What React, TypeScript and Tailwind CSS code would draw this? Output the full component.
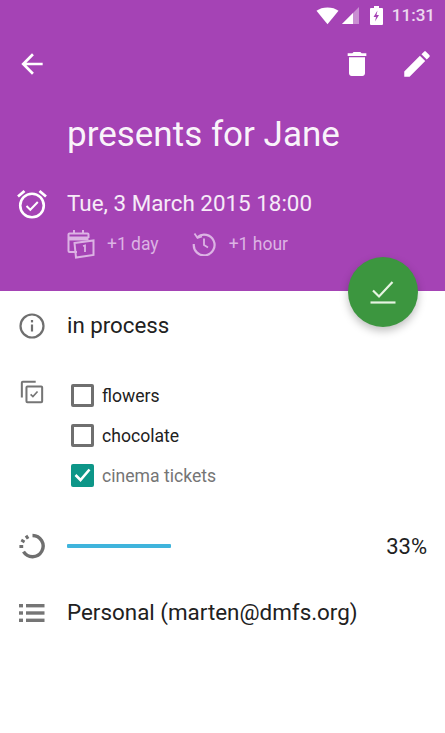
const ITEMS = [
  { label: "flowers", done: false },
  { label: "chocolate", done: false },
  { label: "cinema tickets", done: true },
];

function StatusBar() {
  return (
    <div className="flex h-[30px] items-center justify-end pr-[10px] pt-[1px] text-white">
      <svg width="23" height="18" viewBox="0 0 24 18">
        <path d="M0.500 3.500C3.500 1.200 7.500 0 12 0s8.500 1.200 11.500 3.500L12 17.500z" fill="#fff" />
      </svg>
      <svg width="18" height="18" viewBox="0 0 18 18" className="ml-[3px] mr-[10px]">
        <path d="M0 17L17 0v17z" fill="#fff" fillOpacity="0.4" />
        <path d="M0 17L11 6v11z" fill="#fff" />
      </svg>
      <svg width="13" height="19" viewBox="0 0 13 19" className="mr-[9px]">
        <path d="M4 0h5v2h3a1 1 0 0 1 1 1v15a1 1 0 0 1-1 1H1a1 1 0 0 1-1-1V3a1 1 0 0 1 1-1h3z" fill="#fff" />
        <path d="M7.500 4.500L3.500 11h2.500l-1 4.500 4-6.500H6.500z" fill="#a543b5" />
      </svg>
      <span className="text-[17px] font-medium text-white/80">11:31</span>
    </div>
  );
}

function BackIcon() {
  return (
    <svg width="32" height="32" viewBox="0 0 24 24" fill="#fff">
      <path d="M20 11H7.830l5.590-5.590L12 4l-8 8 8 8 1.410-1.410L7.830 13H20v-2z" />
    </svg>
  );
}

function TrashIcon() {
  return (
    <svg width="32" height="32" viewBox="0 0 24 24" fill="#fff">
      <path d="M6 19c0 1.100.9 2 2 2h8c1.100 0 2-.9 2-2V7H6v12zM19 4h-3.500l-1-1h-5l-1 1H5v2h14V4z" />
    </svg>
  );
}

function EditIcon() {
  return (
    <svg width="34" height="34" viewBox="0 0 24 24" fill="#fff">
      <path d="M3 17.250V21h3.750L17.810 9.940l-3.750-3.750L3 17.250zM20.710 7.040c.39-.39.39-1.020 0-1.410l-2.340-2.340c-.39-.39-1.020-.39-1.410 0l-1.830 1.830 3.750 3.750 1.830-1.830z" />
    </svg>
  );
}

function AlarmCheck() {
  return (
    <svg width="32" height="32" viewBox="0 0 32 32" fill="none" stroke="#fff" strokeWidth="2.600">
      <circle cx="16" cy="17.500" r="11.800" />
      <path d="M10.500 18l3.800 3.800 7.500-7.800" strokeWidth="2" />
      <path d="M2 8.500L8.500 3M30 8.500L23.500 3" strokeWidth="2.800" />
    </svg>
  );
}

function CalendarOne() {
  return (
    <svg width="28" height="30" viewBox="0 0 28 30" fill="none" stroke="#dcb3e4" strokeWidth="2">
      <path d="M10 23H2.500a1 1 0 0 1-1-1V5.500a1 1 0 0 1 1-1h18a1 1 0 0 1 1 1V9" />
      <path d="M1.500 9.500h20" strokeWidth="4" />
      <path d="M7 1v4M16 1v4" />
      <path d="M7.500 14l19-2.500 0 14.500-17.500 2.500z" />
      <path d="M16 17l2-0.500v6.500" strokeWidth="1.800" />
    </svg>
  );
}

function ClockBack() {
  return (
    <svg width="24" height="24" viewBox="0 0 24 24" fill="none" stroke="#dcb3e4" strokeWidth="2.200">
      <path d="M5.500 5A10.400 10.400 0 1 1 1.800 12" />
      <path d="M2.500 1.500l3 4.500 4.500-1.500" strokeWidth="1.800" />
      <path d="M12 6.500V13l4 2.500" strokeWidth="1.800" />
    </svg>
  );
}

function InfoIcon() {
  return (
    <svg width="26" height="26" viewBox="0 0 26 26" fill="none" stroke="#6f6f6f" strokeWidth="2.200">
      <circle cx="13" cy="13" r="11.500" />
      <path d="M13 11.500v7" />
      <path d="M13 7v2.400" />
    </svg>
  );
}

function ChecklistIcon() {
  return (
    <svg width="24" height="24" viewBox="0 0 26 26" fill="none" stroke="#757575" strokeWidth="2.200">
      <path d="M2 19V3a1 1 0 0 1 1-1h14" />
      <rect x="7" y="7" width="17" height="17" rx="1" />
      <path d="M11.500 15.500l2.500 2.500 5-5.500" strokeWidth="1.800" />
    </svg>
  );
}

function ProgressIcon() {
  return (
    <svg width="26" height="26" viewBox="0 0 26 26" fill="none" stroke="#6f6f6f" strokeWidth="3.400">
      <path d="M13.500 2.500a10.600 10.600 0 1 1-9 16.200" />
      <path d="M2.300 15v-3M3.200 9.200l1.400-2.500M6.800 5l2.500-1.600" strokeWidth="3.800" />
    </svg>
  );
}

function ListIcon() {
  return (
    <svg width="26" height="20" viewBox="0 0 26 20" fill="#757575">
      <rect x="0" y="1" width="4" height="3.400" />
      <rect x="7" y="1" width="18.500" height="3.400" />
      <rect x="0" y="8.300" width="4" height="3.400" />
      <rect x="7" y="8.300" width="18.500" height="3.400" />
      <rect x="0" y="15.600" width="4" height="3.400" />
      <rect x="7" y="15.600" width="18.500" height="3.400" />
    </svg>
  );
}

function CheckItem({ label, done }: { label: string; done: boolean }) {
  return (
    <div className="flex h-10 items-center">
      {done ? (
        <span className="grid h-[23px] w-[23px] -translate-y-[1px] place-items-center rounded-[2px] bg-[#0d9688]">
          <svg width="17" height="14" viewBox="0 0 17 14" fill="none" stroke="#fff" strokeWidth="2.600">
            <path d="M1.500 7l5 5 9-10.500" />
          </svg>
        </span>
      ) : (
        <span className="h-[23px] w-[23px] -translate-y-[1px] rounded-[2px] border-[3px] border-[#6f6f6f]" />
      )}
      <span className={"ml-[8px] text-[17.600px] " + (done ? "text-[#757575]" : "text-[#212121]")}>{label}</span>
    </div>
  );
}

export default function App() {
  return (
    <div className="relative h-[733px] w-[445px] overflow-hidden bg-white font-['Roboto',sans-serif] text-[#212121]">
      <header className="h-[291px] bg-[#a543b5] text-white">
        <StatusBar />
        <div className="flex h-[68px] items-center pl-[16px] pr-[11px]">
          <BackIcon />
          <span className="ml-auto mr-[27px]"><TrashIcon /></span>
          <EditIcon />
        </div>
        <h1 className="pl-[67px] pt-[13px] text-[35px] leading-[48px] text-white/95">presents for Jane</h1>
        <div className="mt-[29px] flex h-[32px] items-center pl-[16px]">
          <AlarmCheck />
          <span className="ml-[19px] text-[22.400px] text-white/90">Tue, 3 March 2015 18:00</span>
        </div>
        <div className="mt-[9px] flex h-[30px] items-center pl-[67px] text-[17.500px] text-[#dcb3e4]">
          <CalendarOne />
          <span className="ml-[12px]">+1 day</span>
          <span className="ml-[33px]"><ClockBack /></span>
          <span className="ml-[13px]">+1 hour</span>
        </div>
      </header>

      <button className="absolute left-[348px] top-[257px] grid h-[70px] w-[70px] place-items-center rounded-full bg-[#3c963f] shadow-[0_4px_8px_rgba(0,0,0,0.25)]">
        <svg width="26" height="24" viewBox="0 0 26 24" fill="none" stroke="#e6f4e2" strokeWidth="2.200">
          <path d="M3 10.500l6 6L22.500 2" />
          <path d="M0.500 22.500h25" />
        </svg>
      </button>

      <main>
        <div className="flex h-[70px] items-center pl-[19px]">
          <InfoIcon />
          <span className="ml-[22px] text-[22.300px]">in process</span>
        </div>
        <div className="flex pl-[20px] pt-[19px]">
          <ChecklistIcon />
          <div className="ml-[27px] -mt-[4px]">
            {ITEMS.map((item) => (
              <CheckItem key={item.label} label={item.label} done={item.done} />
            ))}
          </div>
        </div>
        <div className="mt-[35px] flex h-[30px] items-center pl-[19px] pr-[18px]">
          <ProgressIcon />
          <div className="ml-[22px] h-[4px] w-[104px] rounded-[1px] bg-[#3fb4dc]" />
          <span className="ml-auto text-[22px]">33%</span>
        </div>
        <div className="mt-[32px] flex h-[40px] items-center pl-[19px]">
          <ListIcon />
          <span className="ml-[22px] text-[22.400px]">Personal (marten@dmfs.org)</span>
        </div>
      </main>
    </div>
  );
}
